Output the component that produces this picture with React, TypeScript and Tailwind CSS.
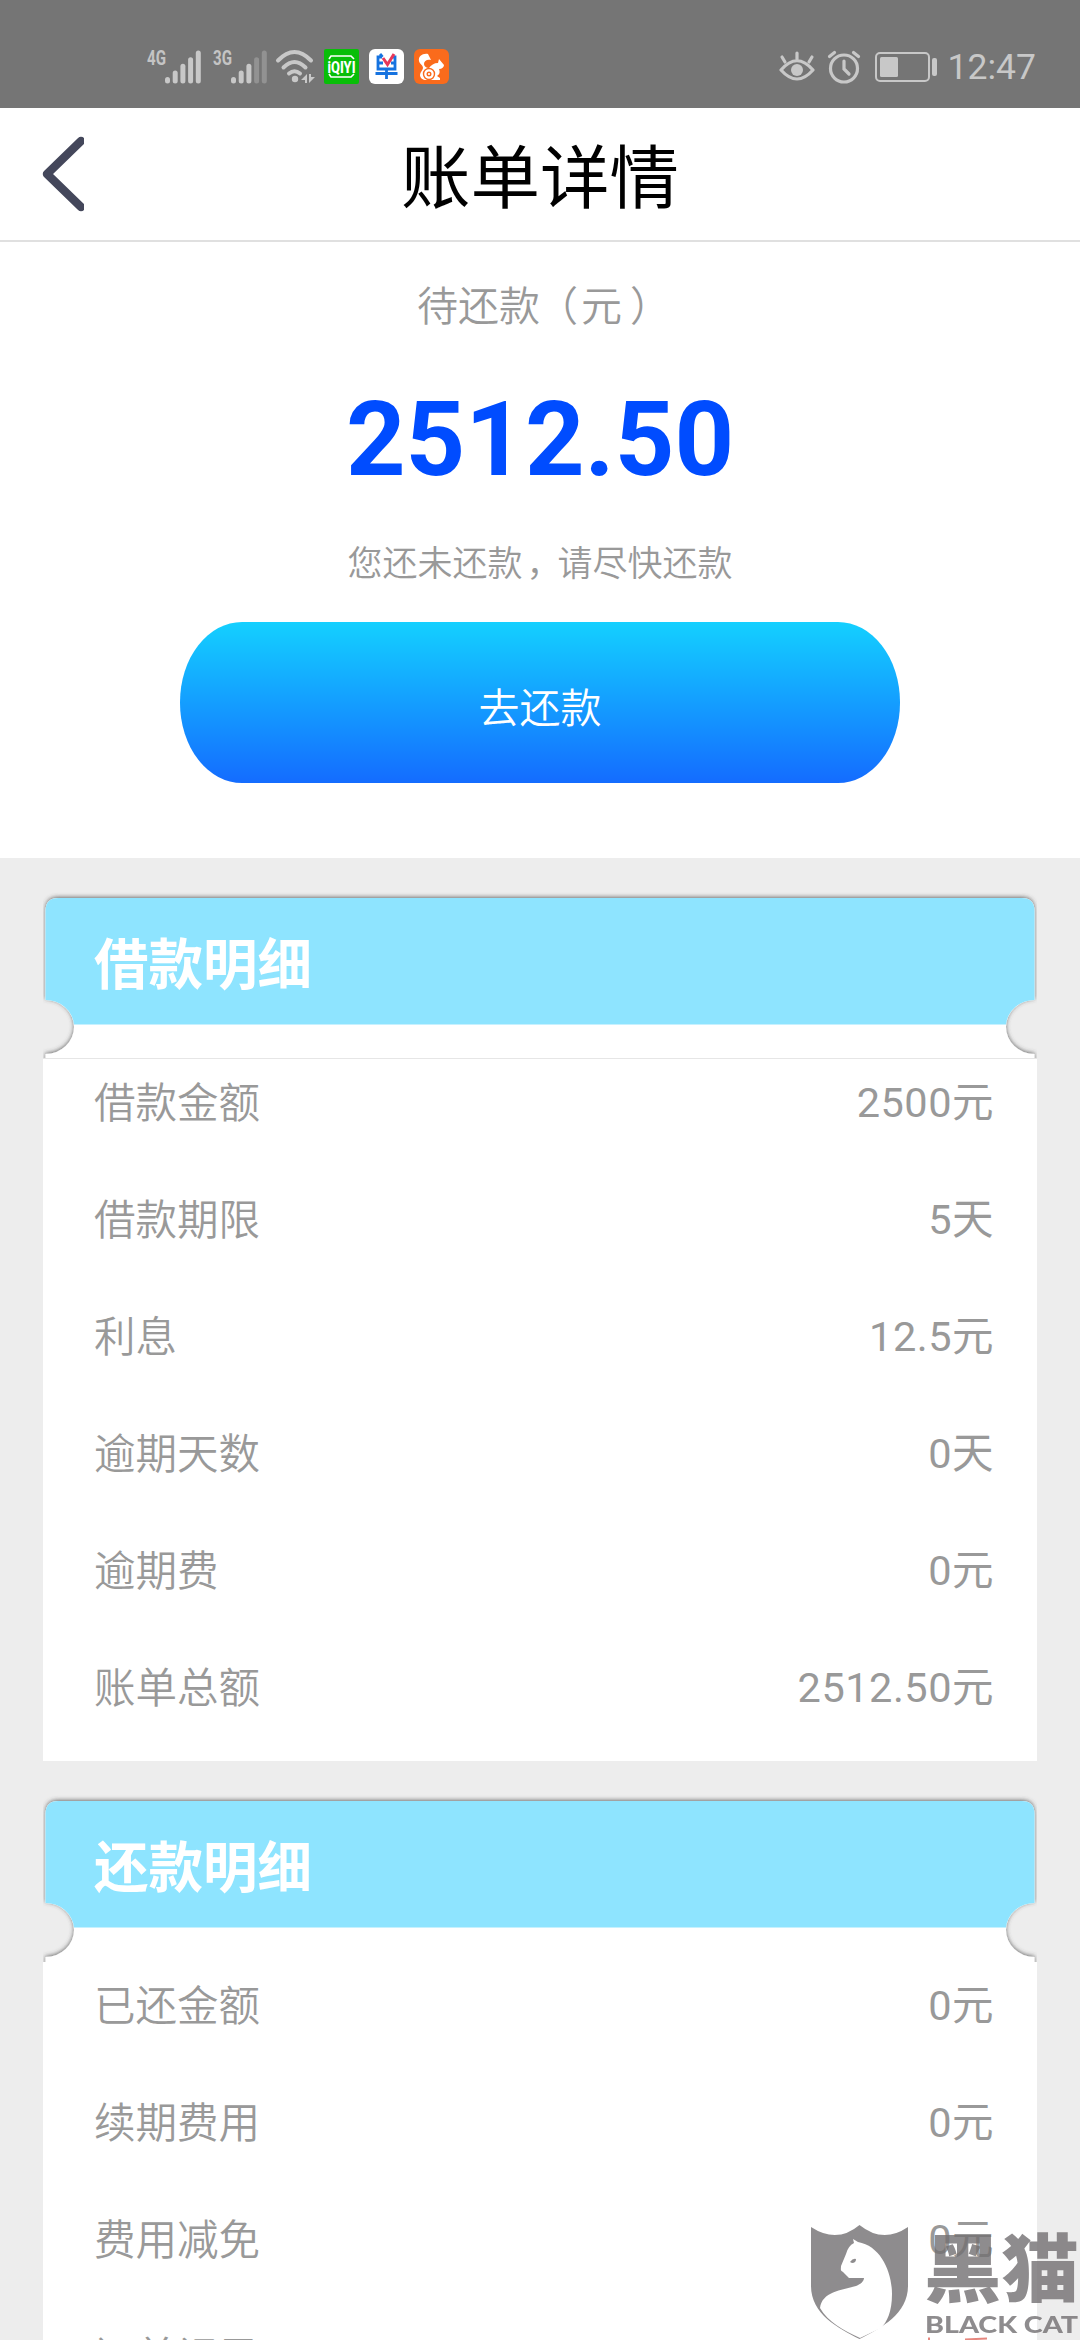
import React from 'react';
import clsx from 'clsx';

const loanRows = [
  { label: '借款金额', value: '2500元' },
  { label: '借款期限', value: '5天' },
  { label: '利息', value: '12.5元' },
  { label: '逾期天数', value: '0天' },
  { label: '逾期费', value: '0元' },
  { label: '账单总额', value: '2512.50元' },
];

const repayRows = [
  { label: '已还金额', value: '0元' },
  { label: '续期费用', value: '0元' },
  { label: '费用减免', value: '0元' },
  { label: '订单记录', value: '' },
];

const SignalIcon = ({ label, strong }: { label: string; strong: number }) => (
  <svg className="overflow-visible" width="56" height="36" viewBox="0 0 56 36">
    <text x="0" y="16" fontFamily="Roboto" fontSize="20" fontWeight="700" fill="#c4c4c4" textLength="19" lengthAdjust="spacingAndGlyphs">
      {label}
    </text>
    {[0, 1, 2, 3, 4].map((i) => (
      <rect
        key={i}
        x={18 + i * 7.7}
        y={28 - i * 6.6}
        width="5"
        height={6.5 + i * 6.6}
        rx="2.5"
        fill={i < strong ? '#c8c8c8' : '#929292'}
      />
    ))}
  </svg>
);

const WifiIcon = () => (
  <svg width="40" height="36" viewBox="0 0 40 36" fill="none" stroke="#c8c8c8" strokeWidth="4" strokeLinecap="round">
    <path d="M3 11.500Q19.500 -5.500 36 11.500" />
    <path d="M8.500 18.500Q19.500 7.500 30.500 18.500" />
    <path d="M14 24.500Q19.500 20 25 24.500" />
    <circle cx="20" cy="30" r="3.200" fill="#c8c8c8" stroke="none" />
    <path d="M32 25v9h-2v-3h-4zM34 34v-9h2v3h4z" fill="#c8c8c8" stroke="none" />
  </svg>
);

const StatusBar = () => (
  <div className="flex h-[108px] shrink-0 items-center bg-[#757575] pt-[25px] pr-[44px] pl-[147px]">
    <SignalIcon label="4G" strong={5} />
    <div className="w-[10px]" />
    <SignalIcon label="3G" strong={3} />
    <div className="w-[6px]" />
    <WifiIcon />
    <div className="ml-[9px] flex items-center gap-[10px]">
      <svg width="35" height="35" viewBox="0 0 35 35">
        <rect width="35" height="35" rx="2" fill="#08be08" />
        <path d="M5 10l2-3h20l3 3M5 25l2 3h20l3-3" stroke="#fff" strokeWidth="1.600" fill="none" />
        <text x="3.500" y="23.500" fontFamily="Roboto" fontSize="16" fontWeight="800" fill="#fff" textLength="28" lengthAdjust="spacingAndGlyphs">
          iQIYI
        </text>
      </svg>
      <svg width="35" height="35" viewBox="0 0 35 35" fill="none">
        <rect width="35" height="35" rx="6" fill="#fff" />
        <path d="M13 8H9v12h17V8h-3M9 14h5M22 14h4M6.500 24.500h22M17.500 20v10" stroke="#1673e0" strokeWidth="2.800" />
        <path d="M11 5l2.500 3" stroke="#1673e0" strokeWidth="2.800" />
        <path d="M14 9l4.500 6.500L25 5" stroke="#e8385a" strokeWidth="3" />
      </svg>
      <svg width="35" height="35" viewBox="0 0 35 35">
        <rect width="35" height="35" rx="6" fill="#fa6b1c" />
        <path
          d="M14 5c-5-1-10 2-9 7 .5 3 4 4 4 7 0 2-3 4-3 7 0 3 3 5 6 5h14v-2l-3-2c3-2 3-4 2-7 3 0 5-2 5-4l-5-6-1 4c-4 0-7 2-9 5-3 0-5-2-5-4 0-3 3-5 7-4-1-2-2-4-3-6z"
          fill="#fff"
        />
        <circle cx="15" cy="25" r="5.500" fill="#fff" stroke="#fa6b1c" strokeWidth="1.400" />
        <circle cx="15" cy="25" r="1.800" fill="none" stroke="#fa6b1c" strokeWidth="1.400" />
      </svg>
    </div>
    <div className="ml-auto flex items-center">
      <svg width="36" height="34" viewBox="0 0 36 34" fill="none" stroke="#c8c8c8" strokeWidth="3.200" strokeLinecap="round">
        <path d="M2 20Q18 1.500 34 20Q18 38 2 20z" strokeLinejoin="round" />
        <circle cx="18" cy="20" r="6" fill="#c8c8c8" stroke="none" />
        <path d="M18 3v6M3 7l3 5M33 7l-3 5" />
      </svg>
      <svg className="ml-[12px]" width="34" height="34" viewBox="0 0 34 34" fill="none" stroke="#c8c8c8" strokeWidth="3.200" strokeLinecap="round">
        <circle cx="17" cy="18.500" r="13.500" />
        <path d="M17 11v8l5 5M2.500 6.500l5-4M31.500 6.500l-5-4" />
      </svg>
      <svg className="ml-[14px]" width="62" height="30" viewBox="0 0 62 30">
        <rect x="1" y="1" width="53" height="28" rx="4" fill="none" stroke="#c8c8c8" strokeWidth="2" />
        <rect x="5" y="5" width="18" height="20" rx="1.500" fill="#c8c8c8" />
        <rect x="57" y="6" width="5" height="18" rx="2" fill="#c8c8c8" />
      </svg>
      <span className="ml-[11px] text-[35.500px] leading-[40px] text-[#c8c8c8]">12:47</span>
    </div>
  </div>
);

// Ticket-shaped header with round notches cut into both sides
const TicketHead = ({ title, line }: { title: string; line?: boolean }) => (
  <div className="relative h-[163px] w-full">
    <svg className="absolute -top-[6px] left-0" width="994" height="170" viewBox="0 -6 994 170">
      <defs>
        <filter id="ticketShadow" x="-2%" y="-8%" width="104%" height="116%">
          <feDropShadow dx="0" dy="-1" stdDeviation="2" floodColor="#444" floodOpacity="0.75" />
        </filter>
        <clipPath id="ticketClip">
          <path d="M0 -6H994V163H0z" />
        </clipPath>
      </defs>
      <g clipPath="url(#ticketClip)">
        <g filter="url(#ticketShadow)">
          <path
            d="M2.500 15Q2.500 2 15.500 2H978.500Q991.500 2 991.500 15V104A28.500 27 0 0 0 991.500 158V175H2.500V158A28.500 27 0 0 0 2.500 104z"
            fill="#fff"
          />
        </g>
        <path
          d="M2.500 15Q2.500 2 15.500 2H978.500Q991.500 2 991.500 15V104A28.500 27 0 0 0 963 128.500H31A28.500 27 0 0 0 2.500 104z"
          fill="#8ee4ff"
        />
      </g>
    </svg>
    <h2 className="relative pt-[34px] pl-[51px] text-[54.500px] leading-[70px] font-bold text-white">{title}</h2>
    {line && <div className="absolute bottom-0 left-0 h-px w-full bg-[#e6e6e6]" />}
  </div>
);

const DetailCard = ({
  title,
  rows,
  line,
  className,
}: {
  title: string;
  rows: { label: string; value: string }[];
  line?: boolean;
  className?: string;
}) => (
  <section className={clsx('mx-[43px] w-[994px] shrink-0', className)}>
    <TicketHead title={title} line={line} />
    <div className="h-[702px] bg-white pr-[43px] pl-[51px]">
      {rows.map((row) => (
        <div key={row.label} className="flex h-[117px] justify-between pt-[15px] text-[41.500px] leading-[60px] text-[#999]">
          <span className="font-[350]">{row.label}</span>
          <span className="-mt-px tracking-[0.5px]">{row.value}</span>
        </div>
      ))}
    </div>
  </section>
);

const Watermark = () => (
  <div className="absolute top-[2224px] left-[811px] h-[116px] w-[269px] opacity-80">
    <svg width="269" height="116" viewBox="0 0 269 116">
      <path d="M0 3Q26 20 48.500 1Q72 20 97 3V62C97 90 70 104 48.500 115C27 104 0 90 0 62z" fill="#737072" />
      <path
        d="M42 15L47 18C70 22 81 48 81 70C81 88 76 98 70 104L49 114C32 106 17 98 9 84C11 68 30 66 45 62C50 60 53 57 53 54L38 54L32 48C29 47 30 45 30 42L35 30Q37 22 43 19z"
        fill="#fff"
      />
      <path d="M39 38q3-4 6-3q0 4-4 4z" fill="#737072" />
      <text x="113" y="72" fontFamily="Noto Sans CJK SC" fontSize="74" fontWeight="900" fill="#737072" textLength="155" lengthAdjust="spacingAndGlyphs">
        黑猫
      </text>
      <text x="114" y="109" fontFamily="Lato" fontSize="23.500" fontWeight="900" fill="#737072" textLength="153" lengthAdjust="spacingAndGlyphs">
        BLACK CAT
      </text>
      <path d="M118 113.500v2.500M154 115.500l22-1" stroke="#e06a60" strokeWidth="2" />
    </svg>
  </div>
);

const App = () => {
  return (
    <div className="relative flex h-[2340px] w-[1080px] flex-col overflow-hidden bg-[#ededed] font-['Roboto','Noto_Sans_CJK_SC',sans-serif]">
      <StatusBar />

      <header className="grid h-[134px] shrink-0 grid-cols-[120px_1fr_120px] items-center border-b-2 border-[#e0e0e0] bg-white">
        <svg className="ml-[42px]" width="42" height="76" viewBox="0 0 42 76" fill="none">
          <path d="M39 5L5 38L39 71" stroke="#44475b" strokeWidth="8.500" strokeLinecap="round" strokeLinejoin="round" />
        </svg>
        <h1 className="pt-[12px] text-center text-[69.500px] leading-[90px] text-black">账单详情</h1>
      </header>

      <main className="flex h-[616px] shrink-0 flex-col items-center bg-white">
        <p className="mt-[35px] text-[41px] leading-[60px] font-[350] text-[#999]">
          待还款<span className="inline-block -translate-x-[3px]">（</span>元<span className="inline-block translate-x-2">）</span>
        </p>
        <p className="mt-[42px] text-[104px] leading-[122px] font-bold text-[#004cff]">2512.50</p>
        <p className="mt-[39px] text-[35px] leading-[50px] font-[350] text-[#999]">
          您还未还款<span className="inline-block translate-x-1">，</span>请尽快还款
        </p>
        <button className="mt-[32px] h-[161px] w-[720px] rounded-[62px/80px] bg-linear-to-b/srgb from-[#14d0ff] to-[#146cff] pt-[14px] text-[41px] font-[350] text-white">
          去还款
        </button>
      </main>

      <DetailCard title="借款明细" rows={loanRows} line className="mt-[38px]" />
      <DetailCard title="还款明细" rows={repayRows} className="mt-[38px]" />

      <Watermark />
    </div>
  );
};

export default App;
